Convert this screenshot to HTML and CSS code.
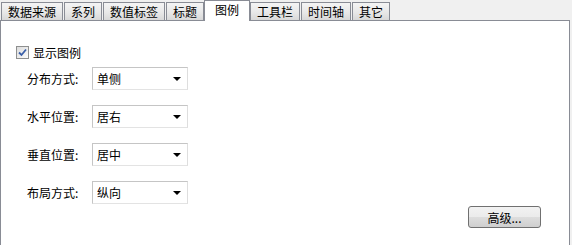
FILE: index.html
```html
<!DOCTYPE html>
<html lang="zh-CN">
<head>
	<meta charset="UTF-8">
	<title>图例</title>
	<link rel="stylesheet" href="styles.css">
</head>
<body>
	<div class="tabs">
		<span class="tab">数据来源</span>
		<span class="tab">系列</span>
		<span class="tab">数值标签</span>
		<span class="tab">标题</span>
		<span class="tab active">图例</span>
		<span class="tab">工具栏</span>
		<span class="tab">时间轴</span>
		<span class="tab">其它</span>
	</div>
	<div class="panel">
		<label class="check">
			<span class="box">
				<svg width="11" height="11" viewBox="0 0 11 11"><path d="M2 5.5 L4.5 8 L9 2.5" fill="none" stroke="#3a5fa8" stroke-width="1.8"/></svg>
			</span>
			显示图例
		</label>
		<div class="fields">
			<div class="row">
				<span class="name">分布方式:</span>
				<div class="select">单侧<i class="arrow"></i></div>
			</div>
			<div class="row">
				<span class="name">水平位置:</span>
				<div class="select">居右<i class="arrow"></i></div>
			</div>
			<div class="row">
				<span class="name">垂直位置:</span>
				<div class="select">居中<i class="arrow"></i></div>
			</div>
			<div class="row">
				<span class="name">布局方式:</span>
				<div class="select">纵向<i class="arrow"></i></div>
			</div>
		</div>
		<div class="actions">
			<button class="btn">高级...</button>
		</div>
	</div>
</body>
</html>
```

FILE: styles.css
```css
body{
	margin: 0;
	background: #f0f0f0;
	font-family: "Noto Sans CJK SC", "Liberation Sans", sans-serif;
	font-size: 12px;
	color: #000;
	height: 245px;
	overflow: hidden;
}

.tabs{
	display: flex;
	align-items: flex-end;
	height: 20px;
	padding-left: 1px;
}

.tab{
	display: block;
	height: 17px;
	line-height: 17px;
	padding: 0 6px;
	margin-right: 1px;
	border: 1px solid #898c95;
	border-bottom: none;
	background: linear-gradient(#f4f4f4, #e8e8e8 55%, #d8d8d8);
}

.tab.active{
	position: relative;
	z-index: 1;
	height: 20px;
	line-height: 18px;
	padding: 0 10px;
	margin: 0 0 -1px -1px;
	background: #fff;
}

.panel{
	width: 568px;
	height: 224px;
	border: 1px solid #898c95;
	border-bottom: none;
	background: #fff;
}

.check{
	display: flex;
	align-items: center;
	height: 15px;
	margin: 24px 0 0 15px;
}

.box{
	display: flex;
	align-items: center;
	justify-content: center;
	width: 11px;
	height: 11px;
	margin-right: 4px;
	border: 1px solid #8e8f8f;
	background: linear-gradient(135deg, #dcdcdc, #fbfbfb);
}

.fields{
	display: flex;
	flex-direction: column;
	gap: 15px;
	margin: 7px 0 0 26px;
}

.row{
	display: flex;
	align-items: center;
	height: 23px;
}

.name{
	width: 65px;
}

.select{
	display: flex;
	align-items: center;
	justify-content: space-between;
	width: 86px;
	height: 21px;
	padding: 0 4px;
	border: 1px solid #c5c5c5;
	border-right-color: #dedede;
	border-bottom-color: #e3e3e3;
}

.arrow{
	width: 0;
	height: 0;
	margin-right: 2px;
	border-left: 4px solid transparent;
	border-right: 4px solid transparent;
	border-top: 4px solid #000;
}

.actions{
	display: flex;
	justify-content: flex-end;
	padding-right: 28px;
	margin-top: 2px;
}

.btn{
	width: 73px;
	height: 22px;
	padding: 0;
	font: inherit;
	border: 1px solid #707070;
	border-radius: 3px;
	background: linear-gradient(#f2f2f2, #ebebeb 50%, #dddddd 51%, #cfcfcf);
}
```
